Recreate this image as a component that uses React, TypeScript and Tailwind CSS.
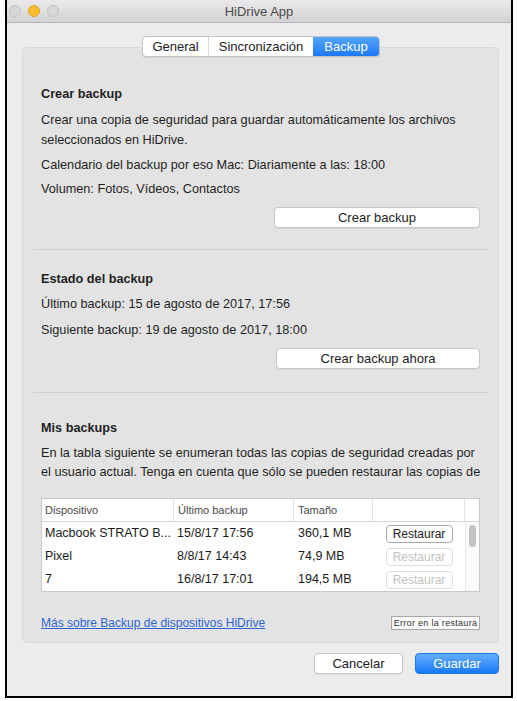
const rows = [
  { device: 'Macbook STRATO B...', date: '15/8/17 17:56', size: '360,1 MB', enabled: true },
  { device: 'Pixel', date: '8/8/17 14:43', size: '74,9 MB', enabled: false },
  { device: '7', date: '16/8/17 17:01', size: '194,5 MB', enabled: false },
]

function TitleBar() {
  return (
    <div className="grid h-[23px] grid-cols-[1fr_auto_1fr] items-center border-b border-[#b5b3b5] bg-gradient-to-b from-[#ebe9eb] to-[#d4d2d4]">
      <div className="flex items-center gap-[7px] pl-[2px]">
        <span className="h-[12px] w-[12px] rounded-full border border-[#c4c4c4] bg-[#d6d6d6]" />
        <span className="h-[12px] w-[12px] rounded-full border border-[#e0a428] bg-[#f7bc30]" />
        <span className="h-[12px] w-[12px] rounded-full border border-[#c4c4c4] bg-[#d6d6d6]" />
      </div>
      <div className="text-[13px] leading-none text-[#4a4a4a]">HiDrive App</div>
      <div />
    </div>
  )
}

function Tabs() {
  return (
    <div className="relative z-10 flex justify-center pl-[4px]">
      <div className="flex h-[21px] overflow-hidden rounded-[4px] border border-[#c6c6c6] bg-white text-[13px] leading-none shadow-[0_1px_1px_rgba(0,0,0,0.08)]">
        <div className="flex w-[66px] items-center justify-center border-r border-[#d9d9d9] text-[#222]">General</div>
        <div className="flex w-[104px] items-center justify-center text-[#222]">Sincronización</div>
        <div className="flex w-[66px] items-center justify-center bg-gradient-to-b from-[#53a5fb] to-[#1a79f6] text-white">
          Backup
        </div>
      </div>
    </div>
  )
}

function PlainButton({ label, width }: { label: string; width: string }) {
  return (
    <div
      className={`mt-[8px] flex h-[21px] ${width} items-center justify-center self-end rounded-[4px] border border-[#c8c8c8] bg-white text-[13px] leading-none text-[#222] shadow-[0_1px_1px_rgba(0,0,0,0.06)]`}
    >
      {label}
    </div>
  )
}

function BackupTable() {
  return (
    <div className="mt-[16px] h-[94px] border border-[#c9c9c9] bg-white">
      {/* Header */}
      <div className="grid h-[23px] grid-cols-[132px_120px_79px_92px_1fr] border-b border-[#d6d6d6] text-[11px] leading-none text-[#4a4a4a]">
        <div className="flex items-center border-r border-[#e3e3e3] pl-[3px]">Dispositivo</div>
        <div className="flex items-center border-r border-[#e3e3e3] pl-[4px]">Último backup</div>
        <div className="flex items-center border-r border-[#e3e3e3] pl-[4px]">Tamaño</div>
        <div className="border-r border-[#e3e3e3]" />
        <div />
      </div>

      {/* Body */}
      <div className="flex">
        <div className="w-[423px]">
          {rows.map((r) => (
            <div key={r.device} className="grid h-[23px] grid-cols-[132px_120px_79px_92px] items-center text-[12.5px] leading-none text-[#1a1a1a]">
              <div className="pl-[3px] whitespace-nowrap">{r.device}</div>
              <div className="pl-[3px]">{r.date}</div>
              <div className="pl-[4px]">{r.size}</div>
              <div className="flex justify-center">
                <div
                  className={`flex h-[18px] w-[67px] items-center justify-center rounded-[4px] border bg-white text-[12px] leading-none ${
                    r.enabled ? 'border-[#ababab] text-[#222]' : 'border-[#dedede] text-[#c2c2c2]'
                  }`}
                >
                  Restaurar
                </div>
              </div>
            </div>
          ))}
        </div>
        <div className="h-[69px] flex-1 border-l border-[#e6e6e6] bg-[#fbfbfb] pt-[3px] pl-[3px]">
          <div className="h-[22px] w-[7px] rounded-full bg-[#c3c3c3]" />
        </div>
      </div>
    </div>
  )
}

export default function App() {
  return (
    <div className="h-[701px] w-[517px] bg-white font-['Liberation_Sans',Arial,sans-serif] text-[12.7px] text-[#1f1f1f]">
      <div className="ml-[5px] flex h-[698px] w-[508px] flex-col border-2 border-t-0 border-black bg-[#ececec]">
        <TitleBar />

        <div className="pt-[13px]">
          <Tabs />

          {/* Group box */}
          <div className="-mt-[10px] ml-[15px] w-[477px] rounded-[5px] border border-[#d9d9d9] bg-[#e3e3e3] px-[10px] pt-[36px] pb-[9px]">
            {/* Crear backup */}
            <div className="flex flex-col px-[8px] leading-[20px]">
              <div className="font-bold">Crear backup</div>
              <div className="mt-[6px]">
                Crear una copia de seguridad para guardar automáticamente los archivos
                <br />
                seleccionados en HiDrive.
              </div>
              <div className="mt-[5px]">Calendario del backup por eso Mac: Diariamente a las: 18:00</div>
              <div className="mt-[4px]">Volumen: Fotos, Vídeos, Contactos</div>
              <PlainButton label="Crear backup" width="w-[206px]" />
            </div>

            <div className="mt-[21px] h-px bg-[#cfcfcf]" />

            {/* Estado del backup */}
            <div className="flex flex-col px-[8px] leading-[20px]">
              <div className="mt-[19px] font-bold">Estado del backup</div>
              <div className="mt-[5px]">Último backup: 15 de agosto de 2017, 17:56</div>
              <div className="mt-[6px]">Siguiente backup: 19 de agosto de 2017, 18:00</div>
              <PlainButton label="Crear backup ahora" width="w-[204px]" />
            </div>

            <div className="mt-[23px] h-px bg-[#cfcfcf]" />

            {/* Mis backups */}
            <div className="flex flex-col px-[8px]">
              <div className="mt-[25px] font-bold leading-[20px]">Mis backups</div>
              <div className="mt-[6px] whitespace-nowrap leading-[19px]">
                En la tabla siguiente se enumeran todas las copias de seguridad creadas por
                <br />
                el usuario actual. Tenga en cuenta que sólo se pueden restaurar las copias de
              </div>
              <BackupTable />
              <div className="mt-[21px] flex h-[20px] items-center justify-between">
                <a className="text-[12px] text-[#2e63d4] underline">Más sobre Backup de dispositivos HiDrive</a>
                <div className="flex h-[14px] w-[89px] items-center justify-center border border-[#a9a9a9] bg-[#fbfbfb] text-[9px] leading-none tracking-[0.3px] text-[#333]">
                  Error en la restaura
                </div>
              </div>
            </div>
          </div>

          {/* Footer */}
          <div className="mt-[10px] flex justify-end gap-[12px] pr-[12px]">
            <div className="flex h-[21px] w-[89px] items-center justify-center rounded-[4px] border border-[#c6c6c6] bg-white text-[13px] leading-none text-[#222] shadow-[0_1px_1px_rgba(0,0,0,0.06)]">
              Cancelar
            </div>
            <div className="flex h-[21px] w-[84px] items-center justify-center rounded-[4px] border border-[#1c78ef] bg-gradient-to-b from-[#63aefb] to-[#1479f6] text-[13px] leading-none text-white">
              Guardar
            </div>
          </div>
        </div>
      </div>
    </div>
  )
}
